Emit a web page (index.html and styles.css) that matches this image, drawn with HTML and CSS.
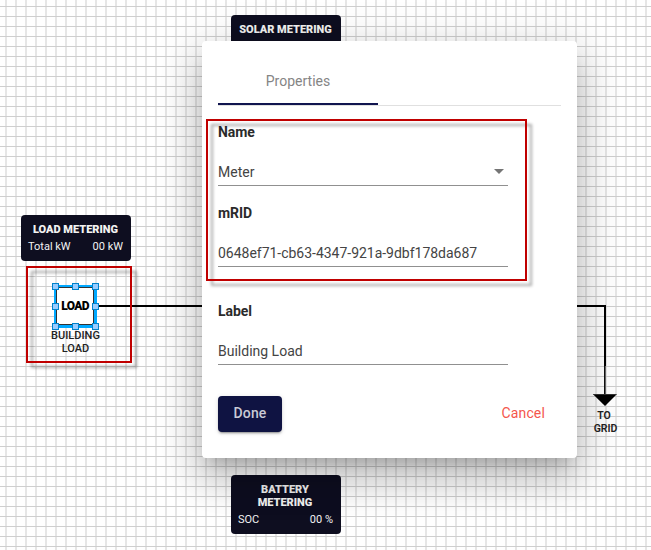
FILE: index.html
```
<!DOCTYPE html>
<html lang="en">
<head>
<meta charset="utf-8">
<title>Meter properties</title>
<link rel="stylesheet" href="styles.css">
</head>
<body>
<main class="canvas">
  <svg class="wires" width="651" height="550" viewBox="0 0 651 550" shape-rendering="crispEdges">
    <path d="M97 306H605V366" fill="none" stroke="#000" stroke-width="2"/>
    <path d="M604 366h1v28h-1z" fill="#111"/>
    <path d="M605 366h1v28h-1z" fill="#666"/>
    <path d="M592.8 394H617L605 406Z" fill="#000" shape-rendering="auto"/>
    <path d="M594 394.5H616" stroke="#333"/>
    <rect x="56" y="287" width="38" height="38" fill="#fff" stroke="none"/>
    <rect x="55.5" y="286.5" width="40" height="40" fill="none" stroke="#00a8ff" stroke-width="3"/>
    <rect x="56.5" y="287.5" width="37" height="37" fill="none" stroke="#333"/>
    <g fill="#99ccff" stroke="#0083cc">
      <rect x="52.5" y="283.5" width="6" height="6"/><rect x="72.5" y="283.5" width="6" height="6"/><rect x="92.5" y="283.5" width="6" height="6"/>
      <rect x="52.5" y="303.5" width="6" height="6"/><rect x="92.5" y="303.5" width="6" height="6"/>
      <rect x="52.5" y="323.5" width="6" height="6"/><rect x="72.5" y="323.5" width="6" height="6"/><rect x="92.5" y="323.5" width="6" height="6"/>
    </g>
  </svg>
  <section class="meter meter-solar"><h2>SOLAR METERING</h2></section>
  <section class="meter meter-load"><h2>LOAD METERING</h2><p><span>Total kW</span><span>00 kW</span></p></section>
  <section class="meter meter-battery"><h2>BATTERY METERING</h2><p><span>SOC</span><span>00 %</span></p></section>
  <div class="node-name">LOAD</div>
  <div class="caption caption-load">BUILDING<br>LOAD</div>
  <div class="caption caption-grid"><span>TO</span><br>GRID</div>
  <div class="mark mark-load"></div>
</main>
<form class="dialog">
  <div class="tabs"><div class="tab">Properties</div></div>
  <label class="field"><b>Name</b><span class="value">Meter<svg width="10" height="5" viewBox="0 0 10 5"><path d="M0 0H10L5 5Z" fill="#757575"/></svg></span></label>
  <label class="field"><b>mRID</b><span class="value mrid">0648ef71-cb63-4347-921a-9dbf178da687</span></label>
  <label class="field field-label"><b>Label</b><span class="value">Building Load</span></label>
  <div class="actions"><button type="button" class="done">Done</button><button type="button" class="cancel">Cancel</button></div>
</form>
<div class="mark mark-fields"></div>
</body>
</html>
```
FILE: styles.css
```
* { box-sizing: border-box; }
body {
  margin: 0;
  width: 651px;
  height: 550px;
  position: relative;
  overflow: hidden;
  font-family: Roboto, sans-serif;
  color: #222;
}
.canvas {
  position: absolute;
  inset: 0;
  background-color: #fff;
  background-image:
    linear-gradient(180deg, #cfcfcf 1px, transparent 1px),
    linear-gradient(90deg, #e6e6e6 2px, transparent 2px);
  background-size: 10px 10px;
  background-position: 0 6px, 5px 0;
}
.wires { position: absolute; left: 0; top: 0; }
.meter {
  position: absolute;
  width: 110px;
  padding: 8px 7px 0;
  border-radius: 4px;
  background: #0e0e20;
  color: #f2f2f2;
}
.meter h2 {
  margin: 0 1px 0 0;
  font-size: 11px;
  line-height: 13px;
  font-weight: 900;
  text-align: center;
  white-space: nowrap;
}
.meter p {
  display: flex;
  justify-content: space-between;
  margin: 4px 1px 0 0;
  font-size: 11px;
  line-height: 13px;
}
.meter-solar { left: 231px; top: 15px; height: 46px; }
.meter-load { left: 21px; top: 215px; height: 46px; }
.meter-battery { left: 231px; top: 475px; height: 59px; }
.meter-battery h2 { white-space: normal; padding: 0 10px 0 9px; }
.node-name {
  position: absolute;
  left: 55px;
  top: 300px;
  width: 40px;
  font-size: 12px;
  line-height: 13px;
  font-weight: 900;
  letter-spacing: -.7px;
  color: #000;
  text-align: center;
}
.caption {
  position: absolute;
  width: 80px;
  font-size: 11px;
  line-height: 13px;
  font-weight: 500;
  text-align: center;
}
.caption-load { left: 35.5px; top: 329px; }
.caption-grid { left: 565.5px; top: 409px; font-weight: 600; font-size: 10.5px; }
.caption-grid span { margin-right: 3px; }
.mark {
  position: absolute;
  border: 2px solid #c00000;
  filter: drop-shadow(5px 5px 1.5px rgba(0, 0, 0, .34));
}
.mark-load { left: 26px; top: 266px; width: 106px; height: 97px; }
.mark-fields { left: 206px; top: 119px; width: 321px; height: 162px; }
.dialog {
  position: absolute;
  left: 202px;
  top: 41px;
  width: 375px;
  height: 417px;
  padding: 16px;
  border-radius: 4px;
  background: #fff;
  box-shadow: 0 11px 15px -7px rgba(0, 0, 0, .2), 0 24px 38px 3px rgba(0, 0, 0, .14), 0 9px 46px 8px rgba(0, 0, 0, .12);
  font-size: 14px;
}
.tabs { height: 49px; border-bottom: 1px solid #e0e0e0; }
.tab {
  width: 160px;
  height: 48px;
  border-bottom: 2px solid #11154f;
  line-height: 48px;
  text-align: center;
  color: #858585;
}
.field { display: block; width: 290px; height: 81px; padding-top: 16px; }
.field b {
  display: block;
  line-height: 20px;
  font-weight: 700;
  color: #2b2b2b;
  letter-spacing: -.05px;
}
.value {
  display: flex;
  justify-content: space-between;
  align-items: center;
  height: 28px;
  margin-top: 16px;
  padding-right: 4px;
  border-bottom: 1px solid #909090;
  color: #444;
}
.mrid { letter-spacing: -.02px; }
.field-label { margin-top: 17px; }
.actions {
  display: flex;
  justify-content: space-between;
  align-items: center;
  margin-top: 30px;
}
button {
  border: 0;
  padding: 0 0 2px;
  height: 36px;
  font: 500 14px Roboto, sans-serif;
  letter-spacing: .15px;
  background: none;
}
.done {
  width: 64px;
  border-radius: 4px;
  background: #0f1342;
  color: #c9cad6;
  box-shadow: 0 3px 1px -2px rgba(0, 0, 0, .2), 0 2px 2px rgba(0, 0, 0, .14), 0 1px 5px rgba(0, 0, 0, .12);
}
.cancel { padding-right: 16px; color: #f4564c; font-weight: 400; }
```
